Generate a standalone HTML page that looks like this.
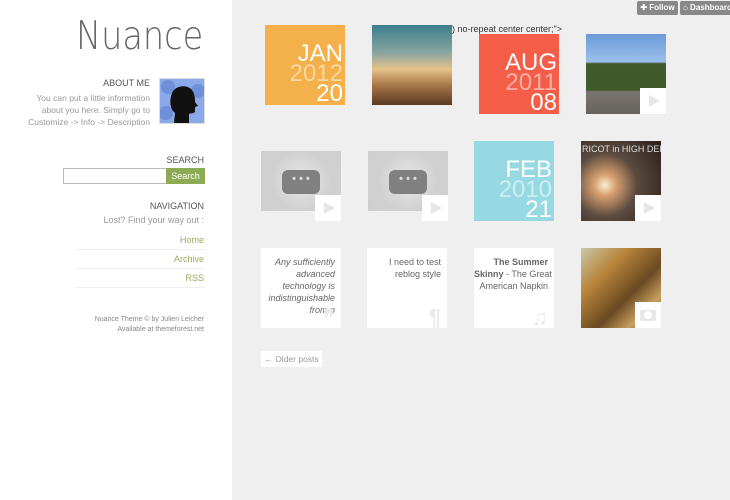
<!DOCTYPE html>
<html><head><meta charset="utf-8"><style>
*{margin:0;padding:0;box-sizing:border-box}
body{width:730px;height:500px;overflow:hidden;background:#efefef;font-family:"Liberation Sans",sans-serif;position:relative}
.side{position:absolute;left:0;top:0;width:232px;height:500px;background:#fff}
.a{position:absolute}
.r{text-align:right}
.t{position:absolute;width:80px;height:80px}
.date{color:#fff;text-align:right;padding-right:2px;line-height:20px;font-size:24px}
.date span{display:block}
.pb{position:absolute;right:0;bottom:0;width:26px;height:26px;background:#fff}
.pb:after{content:"";position:absolute;left:9px;top:7px;border-left:11px solid #e6e6e6;border-top:6px solid transparent;border-bottom:6px solid transparent}
.vid{position:absolute;width:80px;height:60px;background:radial-gradient(circle at 50% 50%,#e8e8e8 0,#d0d0d0 60%,#cfcfcf)}
.vid i{position:absolute;left:21px;top:19px;width:38px;height:24px;background:#808080;border-radius:6px}
.vid i:after{content:"• • •";position:absolute;left:0;right:0;top:3px;text-align:center;color:#ddd;font-size:11px;font-style:normal;font-weight:bold}
.txt{background:#fff;font-size:9px;color:#666;text-align:right;padding:8px 6px 8px 0;line-height:12px;white-space:nowrap}
.ic{position:absolute;right:6px;bottom:4px;color:#eaeaea;font-size:22px;font-weight:bold;font-style:normal}
</style></head><body>
<div class="side">
<div class="a" style="left:76px;top:14px;font-size:39px;color:#666;font-weight:200;font-family:'DejaVu Sans ExtraLight','DejaVu Sans Light','DejaVu Sans',sans-serif;transform:scaleX(0.86);transform-origin:left">Nuance</div>
<div class="a r" style="right:82px;top:78px;font-size:9px;color:#555">ABOUT ME</div>
<div class="a r" style="right:82px;top:92px;font-size:8.5px;color:#999;line-height:12px">You can put a little information<br>about you here. Simply go to<br>Customize -&gt; Info -&gt; Description</div>
<div class="a" style="left:159px;top:78px;width:46px;height:46px;border:1px solid #ddd;background:#8ba9e8;overflow:hidden">
<svg width="44" height="44" viewBox="0 0 44 44"><circle cx="8" cy="8" r="7" fill="#6f8fd8"/><circle cx="38" cy="12" r="7" fill="#6f8fd8"/><circle cx="6" cy="34" r="7" fill="#6f8fd8"/><path d="M14 44 L15 34 C10 30 9 22 12 14 C15 7 25 5 31 10 C35 14 35 20 35 23 L38 27 L35 28 L35 33 C33 35 30 34 29 35 L29 44Z" fill="#111"/></svg></div>
<div class="a r" style="right:28px;top:155px;font-size:9px;color:#555">SEARCH</div>
<div class="a" style="left:63px;top:168px;width:104px;height:16px;border:1px solid #bbb"></div>
<div class="a" style="left:166px;top:168px;width:39px;height:16px;background:#8daa55;color:#fff;font-size:9px;text-align:center;line-height:16px">Search</div>
<div class="a r" style="right:28px;top:201px;font-size:9px;color:#555">NAVIGATION</div>
<div class="a r" style="right:28px;top:215px;font-size:9px;color:#999">Lost? Find your way out :</div>
<div class="a r" style="right:28px;top:235px;font-size:9px;color:#9aab5e">Home</div>
<div class="a" style="left:76px;top:249px;width:129px;border-top:1px solid #eee"></div>
<div class="a r" style="right:28px;top:254px;font-size:9px;color:#9aab5e">Archive</div>
<div class="a" style="left:76px;top:268px;width:129px;border-top:1px solid #eee"></div>
<div class="a r" style="right:28px;top:273px;font-size:9px;color:#9aab5e">RSS</div>
<div class="a" style="left:76px;top:287px;width:129px;border-top:1px solid #eee"></div>
<div class="a r" style="right:28px;top:315px;font-size:7px;color:#888;line-height:10px">Nuance Theme © by Julien Leicher<br>Available at themeforest.net</div>
</div>

<div class="a" style="left:637px;top:1px;width:41px;height:14px;background:#888;border-radius:2px;color:#fff;font-size:8px;font-weight:bold;line-height:14px;text-align:center">✚ Follow</div>
<div class="a" style="left:680px;top:1px;width:55px;height:14px;background:#888;border-radius:2px;color:#fff;font-size:8px;font-weight:bold;line-height:14px;padding-left:3px">⌂ Dashboard</div>
<div class="a" style="left:452px;top:24px;font-size:9px;color:#333">) no-repeat center center;"&gt;</div>

<div class="t date" style="left:265px;top:25px;background:#f4b04a;padding-top:19px"><span>JAN</span><span style="color:#f9d7a2">2012</span><span>20</span></div>
<div class="t" style="left:372px;top:25px;background:linear-gradient(#3b7f8e 0%,#8aa6a0 35%,#e6c28a 55%,#a8774a 75%,#5b3a22 100%)"></div>
<div class="t date" style="left:479px;top:34px;background:#f45e48;padding-top:19px"><span>AUG</span><span style="color:#f9b0a4">2011</span><span>08</span></div>
<div class="t" style="left:586px;top:34px;background:linear-gradient(#6a9ad8 0%,#9cc0ec 35%,#3f5a2c 37%,#3e5a2a 70%,#7a7570 72%,#66625e 100%)"><div class="pb"></div></div>

<div class="vid" style="left:261px;top:151px"><i></i></div><div class="pb" style="left:315px;top:195px;right:auto;bottom:auto"></div>
<div class="vid" style="left:368px;top:151px"><i></i></div><div class="pb" style="left:422px;top:195px;right:auto;bottom:auto"></div>
<div class="t date" style="left:474px;top:141px;background:#97d9e2;padding-top:19px"><span>FEB</span><span style="color:#cdeef2">2010</span><span>21</span></div>
<div class="t" style="left:581px;top:141px;overflow:hidden;background:radial-gradient(circle at 30% 55%,#f8f0d0 0,#d8a070 15%,#5a4a40 45%,#2a1d18 100%)"><div style="position:absolute;top:3px;left:1px;font-size:9px;color:#ddd;white-space:nowrap">RICOT in HIGH DEFIN</div><div class="pb"></div></div>

<div class="t txt" style="left:261px;top:248px;font-style:italic">Any sufficiently<br>advanced<br>technology is<br>indistinguishable<br>from n<span class="ic">❞</span></div>
<div class="t txt" style="left:367px;top:248px">I need to test<br>reblog style<span class="ic">¶</span></div>
<div class="t txt" style="left:474px;top:248px"><b>The Summer</b><br><b>Skinny</b> - The Great<br>American Napkin<span class="ic">♫</span></div>
<div class="t" style="left:581px;top:248px;background:linear-gradient(135deg,#c9c9a8 0%,#b8843a 30%,#6a4a22 60%,#caa060 80%,#3a2a18 100%)"><div style="position:absolute;right:0;bottom:0;width:26px;height:26px;background:#fff"><div style="position:absolute;left:5px;top:8px;width:16px;height:11px;background:#e8e8e8;border-radius:2px"></div><div style="position:absolute;left:9px;top:9px;width:8px;height:8px;border-radius:50%;background:#fff"></div></div></div>

<div class="a" style="left:261px;top:351px;width:61px;height:16px;background:#fff;font-size:8.5px;color:#999;line-height:16px;text-align:center">← Older posts</div>
</body></html>
